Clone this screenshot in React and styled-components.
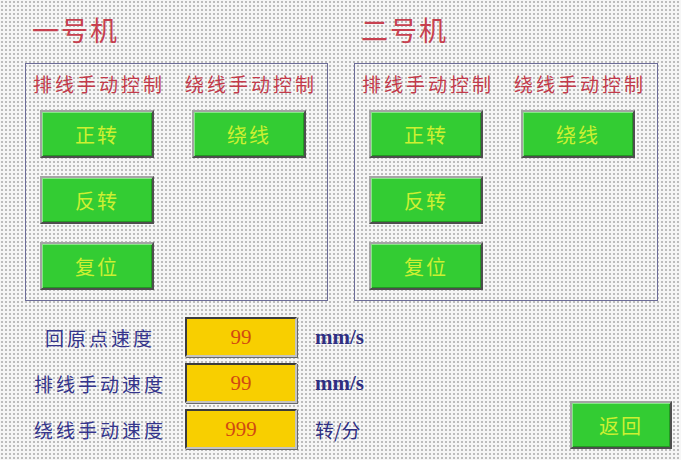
import React from "react";
import styled, { createGlobalStyle } from "styled-components";

const GlobalStyle = createGlobalStyle`
  html, body {
    margin: 0;
    padding: 0;
    width: 681px;
    height: 460px;
    overflow: hidden;
    background-color: #f6f6f6;
    background-image: radial-gradient(circle, #bdbdbd 0.9px, transparent 1.3px);
    background-size: 4px 4px;
    font-family: "Noto Sans CJK SC", "Noto Sans", sans-serif;
  }
`;

const Page = styled.div`
  width: 681px;
  height: 460px;
  box-sizing: border-box;
  padding: 14px 0 0 25px;
  display: flex;
  flex-direction: column;
`;

const TopRow = styled.div`
  display: flex;
  gap: 26px;
`;

const Machine = styled.section`
  display: flex;
  flex-direction: column;
  width: ${(p) => p.$width}px;
`;

const Title = styled.h1`
  margin: 0 0 17px 7px;
  height: 32px;
  line-height: 32px;
  font-size: 27px;
  font-weight: 400;
  letter-spacing: 2px;
  color: #c7404f;
`;

const Panel = styled.div`
  box-sizing: border-box;
  height: 238px;
  border: 1.5px solid #6c6c98;
  padding: 10px 0 0 7px;
  display: flex;
`;

const Column = styled.div`
  flex: ${(p) => (p.$grow ? "1 1 auto" : "0 0 152px")};
  min-width: 0;
  display: flex;
  flex-direction: column;
  gap: 18px;
`;

const GroupLabel = styled.div`
  height: 20px;
  line-height: 20px;
  margin-bottom: -2px;
  font-size: 19px;
  letter-spacing: 3px;
  color: #c33a4a;
  white-space: nowrap;
`;

const GreenButton = styled.button`
  box-sizing: border-box;
  width: ${(p) => p.$w || 114}px;
  height: 48px;
  margin-left: 7px;
  padding: 0;
  background: #33cc33;
  border: 2px solid;
  border-color: #a4a4a4 #4e4e4e #4e4e4e #a4a4a4;
  box-shadow: inset 1px 1px 0 #86e886, inset -1px -1px 0 #229922;
  color: #ccf032;
  font-family: "Noto Sans CJK SC", "Noto Sans", sans-serif;
  font-size: 20px;
  letter-spacing: 2px;
  cursor: pointer;
`;

const Bottom = styled.div`
  margin-top: 16px;
  display: flex;
  align-items: flex-end;
`;

const Fields = styled.div`
  display: flex;
  flex-direction: column;
  gap: 6px;
  padding-left: 5px;
`;

const FieldRow = styled.div`
  display: flex;
  align-items: center;
  height: 40px;
`;

const FieldLabel = styled.div`
  width: 140px;
  text-align: center;
  font-size: 19px;
  letter-spacing: 3px;
  color: #34348c;
  white-space: nowrap;
`;

const ValueBox = styled.div`
  box-sizing: border-box;
  margin-left: 15px;
  width: 112px;
  height: 40px;
  background: #f8cf00;
  border: 2px solid;
  border-color: #3c3c3c #c4c4c4 #c4c4c4 #3c3c3c;
  box-shadow: 1px 1px 0 #6a6a6a;
  display: flex;
  align-items: center;
  justify-content: center;
  font-family: "Liberation Serif", serif;
  font-size: 21px;
  color: #d14a12;
`;

const Unit = styled.div`
  margin-left: 18px;
  font-family: ${(p) =>
    p.$cjk
      ? '"Noto Sans CJK SC", "Liberation Serif", sans-serif'
      : '"Liberation Serif", "Noto Sans CJK SC", serif'};
  font-size: ${(p) => (p.$cjk ? 19 : 21)}px;
  font-weight: ${(p) => (p.$cjk ? 400 : 700)};
  color: #2e2e82;
  white-space: nowrap;
`;

const ReturnButton = styled(GreenButton)`
  margin-left: auto;
  margin-right: 9px;
`;

function MachinePanel({ title, width }) {
  return (
    <Machine $width={width}>
      <Title>{title}</Title>
      <Panel>
        <Column>
          <GroupLabel>排线手动控制</GroupLabel>
          <GreenButton>正转</GreenButton>
          <GreenButton>反转</GreenButton>
          <GreenButton>复位</GreenButton>
        </Column>
        <Column $grow>
          <GroupLabel>绕线手动控制</GroupLabel>
          <GreenButton>绕线</GreenButton>
        </Column>
      </Panel>
    </Machine>
  );
}

const fields = [
  { label: "回原点速度", value: "99", unit: "mm/s" },
  { label: "排线手动速度", value: "99", unit: "mm/s" },
  { label: "绕线手动速度", value: "999", unit: "转/分", cjk: true },
];

export default function App() {
  return (
    <>
      <GlobalStyle />
      <Page>
        <TopRow>
          <MachinePanel title="一号机" width={303} />
          <MachinePanel title="二号机" width={304} />
        </TopRow>
        <Bottom>
          <Fields>
            {fields.map((f) => (
              <FieldRow key={f.label}>
                <FieldLabel>{f.label}</FieldLabel>
                <ValueBox>{f.value}</ValueBox>
                <Unit $cjk={f.cjk}>{f.unit}</Unit>
              </FieldRow>
            ))}
          </Fields>
          <ReturnButton $w={102}>返回</ReturnButton>
        </Bottom>
      </Page>
    </>
  );
}
